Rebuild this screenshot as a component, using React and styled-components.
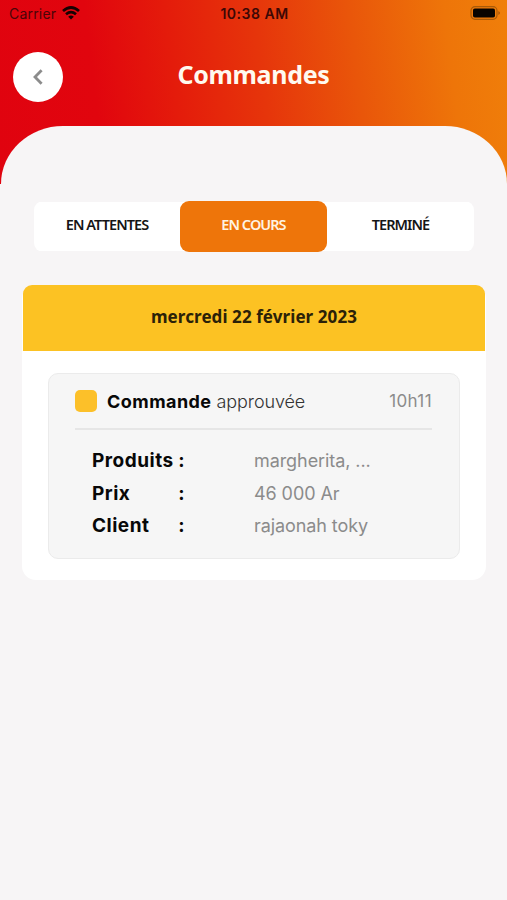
import React from 'react';
import styled, { createGlobalStyle } from 'styled-components';

const GlobalStyle = createGlobalStyle`
	* {
		box-sizing: border-box;
	}
	body {
		margin: 0;
		background: #f7f5f6;
		font-family: Inter, "Liberation Sans", sans-serif;
		color: #080808;
	}
	button {
		border: 0;
		padding: 0;
		font: inherit;
	}
`;

const Screen = styled.div`
	width: 507px;
	height: 900px;
	overflow: hidden;
`;

const Header = styled.header`
	display: flex;
	flex-direction: column;
	height: 184px;
	background: linear-gradient(83deg, #e0030f 0%, #e1050e 20%, #e41b0b 35%, #e6350b 52%, #e9560a 70%, #ee7509 88%, #f07f0a 100%);
`;

const StatusBar = styled.div`
	display: grid;
	grid-template-columns: 1fr auto 1fr;
	align-items: center;
	height: 28px;
	padding: 0 6px 0 9px;
	font-size: 14px;
	line-height: 28px;
`;

const Carrier = styled.div`
	display: flex;
	align-items: center;
	gap: 6px;
	color: #4a0508;
	letter-spacing: 0.2px;
	svg {
		margin-top: -2px;
	}
`;

const Clock = styled.span`
	margin-right: 1px;
	color: #3c0806;
	font-weight: 600;
	letter-spacing: 0.5px;
`;

const BatteryIcon = styled.svg`
	justify-self: end;
	margin-top: -2px;
`;

const TitleBar = styled.div`
	display: grid;
	grid-template-columns: 1fr auto 1fr;
	height: 98px;
	padding: 24px 13px 0;
`;

const BackBtn = styled.button`
	display: flex;
	align-items: center;
	justify-content: center;
	width: 50px;
	height: 50px;
	border-radius: 50%;
	background: #fff;
`;

const Title = styled.h1`
	margin: 0;
	color: #fffaf0;
	font: 700 25px/44px "Noto Sans", "Open Sans", sans-serif;
	letter-spacing: -0.3px;
`;

const SheetTop = styled.div`
	flex: 1;
	margin-left: 1px;
	border-radius: 62px 62px 0 0 / 58px 58px 0 0;
	background: #f7f5f6;
`;

const Content = styled.main`
	padding: 17px 21px 0 22px;
`;

const Tabs = styled.nav`
	display: grid;
	grid-template-columns: 146px 147px 147px;
	width: 440px;
	height: 51px;
	margin-left: 12px;
	border-radius: 9px;
	background: linear-gradient(#fff, #fff) 0 1px / 100% 49px no-repeat;
`;

const Tab = styled.button`
	padding-bottom: 6px;
	border-radius: 9px;
	background: ${({ $active }) => $active ? '#ee750a' : 'transparent'};
	color: ${({ $active }) => $active ? '#fff3e2' : '#151515'};
	font: 600 14.5px/44px "Noto Sans", "Open Sans", sans-serif;
	letter-spacing: -0.95px;
`;

const DayCard = styled.section`
	height: 295px;
	margin-top: 33px;
	border-radius: 14px;
	background: #fff;
`;

const DayTitle = styled.h2`
	height: 66px;
	margin: 0 1px;
	border-radius: 9px 9px 0 0;
	background: #fcc223;
	color: #2b2108;
	font: 700 17px/64px "Noto Sans", "Open Sans", sans-serif;
	letter-spacing: 0.08px;
	text-align: center;
`;

const Order = styled.article`
	width: 412px;
	height: 186px;
	margin: 22px 0 0 26px;
	padding: 0 27px 0 26px;
	border: 1px solid #ebebeb;
	border-radius: 10px;
	background: #f6f6f6;
`;

const OrderHead = styled.div`
	display: flex;
	align-items: center;
	height: 56px;
	border-bottom: 2px solid #e6e6e6;
	font-size: 18px;
`;

const StatusMark = styled.span`
	width: 22px;
	height: 22px;
	margin-right: 10px;
	border-radius: 5px;
	background: #fcc029;
`;

const OrderName = styled.strong`
	margin-right: 5px;
	font-weight: 700;
	letter-spacing: 0.45px;
`;

const OrderState = styled.span`
	color: #333;
	font-weight: 300;
	letter-spacing: -0.1px;
`;

const OrderTime = styled.time`
	margin-left: auto;
	color: #8b8b8b;
	font-size: 17px;
	letter-spacing: 0.4px;
`;

const Details = styled.dl`
	margin: 15px 0 0 17px;
`;

const DetailRow = styled.div`
	display: flex;
	height: 32.5px;
	line-height: 32px;
	font-size: 18px;
`;

const DetailName = styled.dt`
	display: flex;
	justify-content: space-between;
	width: 93px;
	margin-right: 69px;
	font-weight: 650;
	font-size: 19px;
	letter-spacing: 0.5px;
`;

const DetailValue = styled.dd`
	margin: 0;
	color: #8b8b8b;
	letter-spacing: -0.08px;
`;

const tabs = [
	{ name: 'EN ATTENTES' },
	{ name: 'EN COURS', active: true },
	{ name: 'TERMINÉ' },
];

const details = [
	{ name: 'Produits', value: 'margherita, ...' },
	{ name: 'Prix', value: '46 000 Ar' },
	{ name: 'Client', value: 'rajaonah toky' },
];

const WifiIcon = () => (
	<svg width="18" height="14" viewBox="0 0 18 14" fill="none" stroke="#170202" strokeWidth="2.7">
		<path d="M1 5 Q9 -2 17 5" />
		<path d="M4 8.2 Q9 4 14 8.2" />
		<path d="M6.2 10.7 Q9 8.5 11.8 10.7 L9 13.6Z" fill="#170202" stroke="none" />
	</svg>
);

const App = () => (
	<>
		<GlobalStyle />
		<Screen>
			<Header>
				<StatusBar>
					<Carrier>Carrier <WifiIcon /></Carrier>
					<Clock>10:38 AM</Clock>
					<BatteryIcon width="31" height="14" viewBox="0 0 31 14">
						<rect x="1" y="0.7" width="26" height="12.6" rx="4" fill="none" stroke="#a85a08" strokeWidth="1.2" />
						<rect x="3" y="2.5" width="22" height="9" rx="1.8" fill="#080400" />
						<path d="M28.5 5 Q31 7 28.5 9Z" fill="#8f4a08" />
					</BatteryIcon>
				</StatusBar>
				<TitleBar>
					<BackBtn aria-label="Retour">
						<svg width="10" height="16" viewBox="0 0 10 16" fill="none" stroke="#8c8c8c" strokeWidth="2.8">
							<path d="M8.6 1.2 L2 8 L8.6 14.8" />
						</svg>
					</BackBtn>
					<Title>Commandes</Title>
				</TitleBar>
				<SheetTop />
			</Header>
			<Content>
				<Tabs>
					{tabs.map(tab => (
						<Tab key={tab.name} $active={tab.active}>{tab.name}</Tab>
					))}
				</Tabs>
				<DayCard>
					<DayTitle>mercredi 22 février 2023</DayTitle>
					<Order>
						<OrderHead>
							<StatusMark />
							<OrderName>Commande</OrderName>
							<OrderState>approuvée</OrderState>
							<OrderTime>10h11</OrderTime>
						</OrderHead>
						<Details>
							{details.map(item => (
								<DetailRow key={item.name}>
									<DetailName><span>{item.name}</span><span>:</span></DetailName>
									<DetailValue>{item.value}</DetailValue>
								</DetailRow>
							))}
						</Details>
					</Order>
				</DayCard>
			</Content>
		</Screen>
	</>
);

export default App;
